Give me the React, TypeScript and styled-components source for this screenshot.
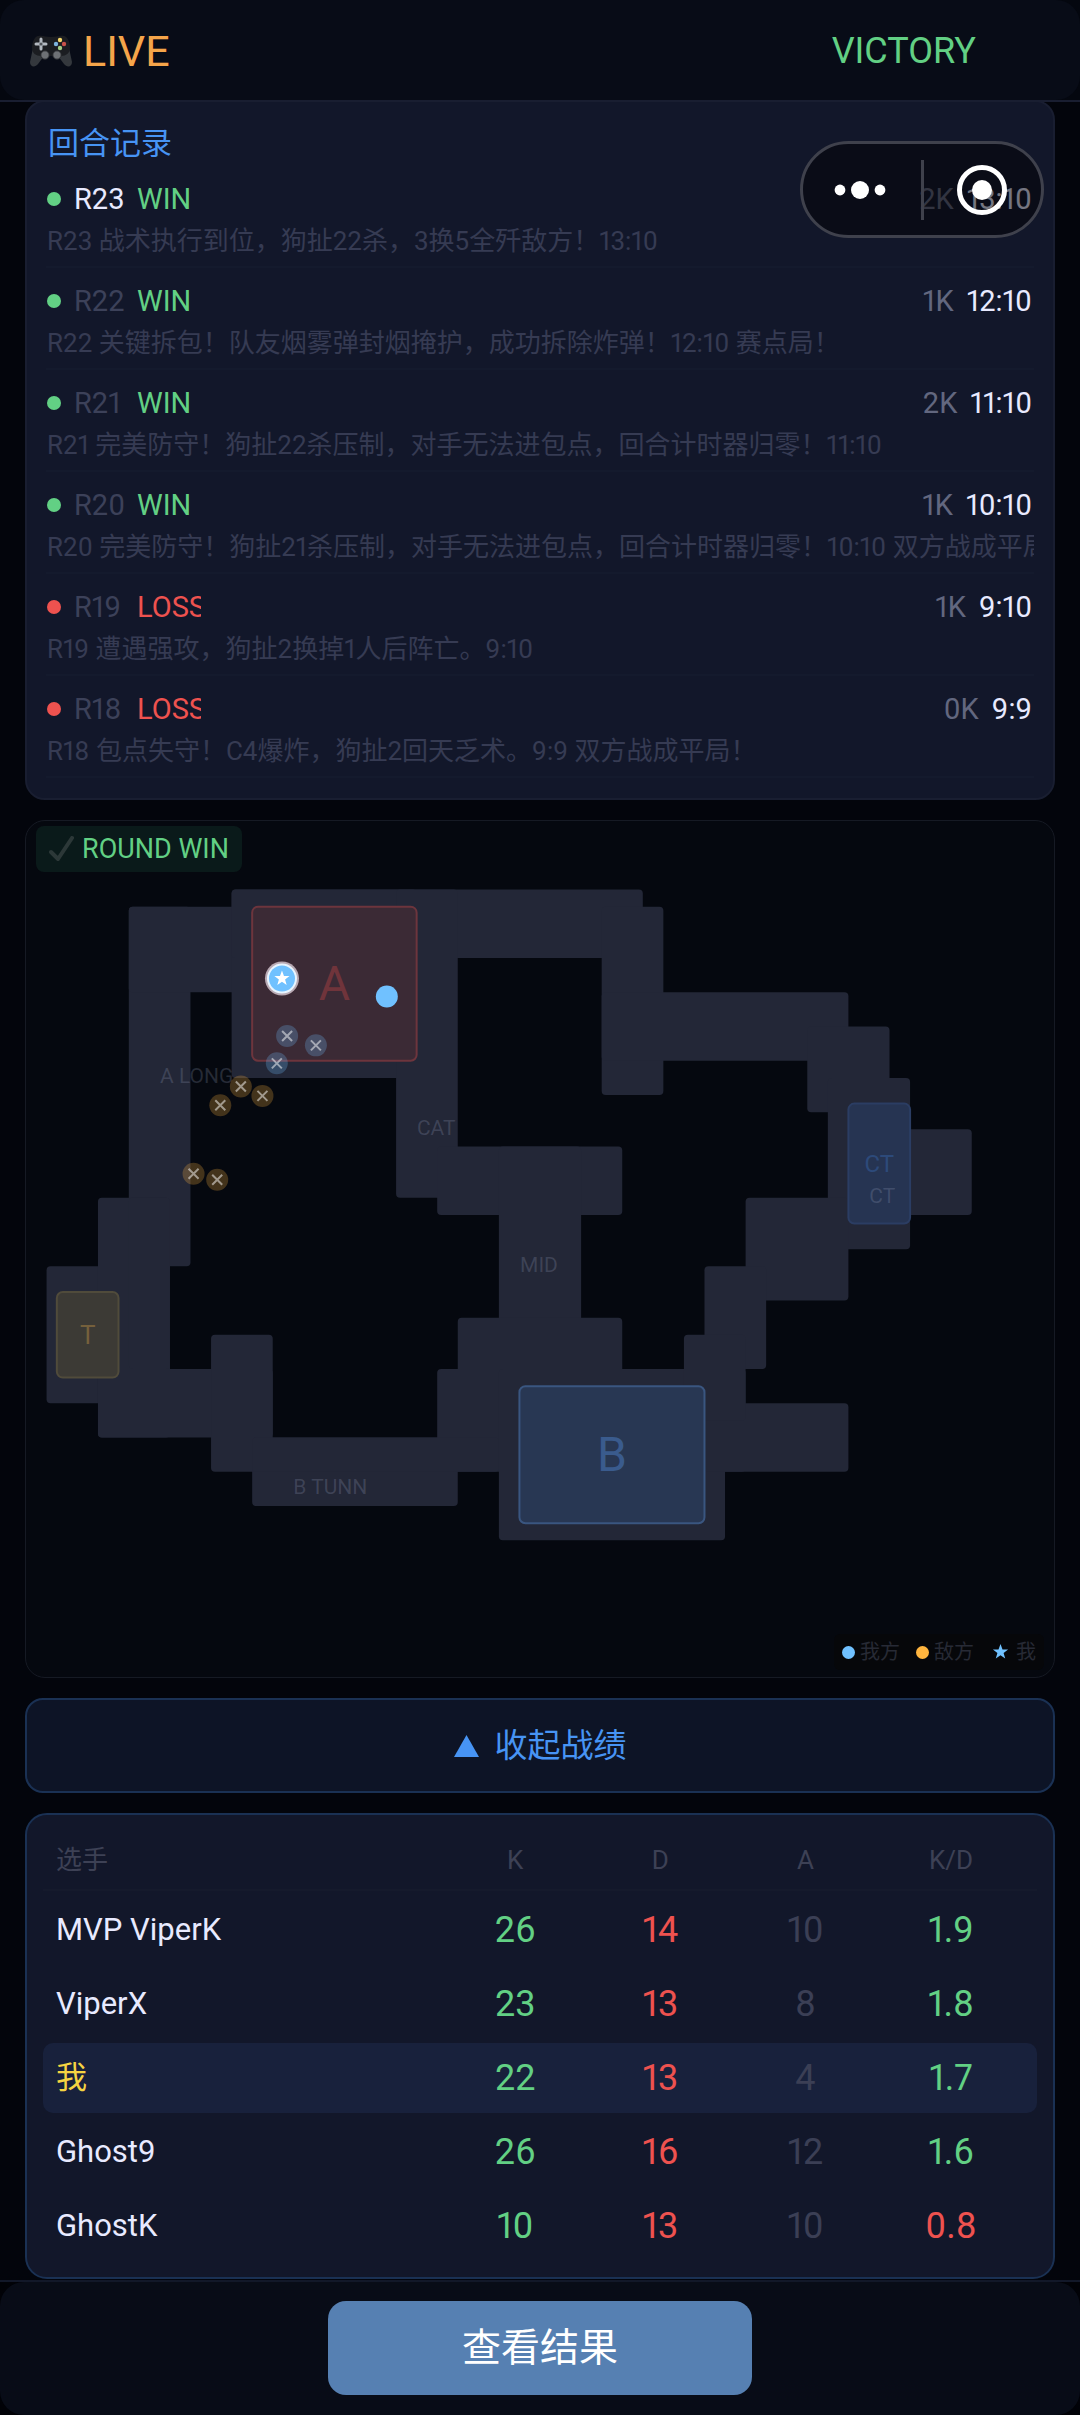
import React from "react";
import styled, { createGlobalStyle } from "styled-components";

const c = {
  page: "#03050c",
  bar: "#080c17",
  card: "#12172a",
  line: "#191e31",
  dim: "#3c4159",
  faint: "#363b53",
  mid: "#62677f",
  text: "#e8eaff",
  green: "#62d084",
  red: "#ee524f",
  blue: "#4794f4",
  ally: "#70c1ff",
  enemy: "#ffb53f",
};

const GlobalStyle = createGlobalStyle`
  * { box-sizing: border-box; }
  body {
    margin: 0;
    background: ${c.page};
    color: ${c.text};
    font-family: Roboto, "Noto Sans CJK SC", sans-serif;
    font-variant-numeric: proportional-nums;
  }
  button { font-family: inherit; cursor: pointer; }
`;

const Screen = styled.div`
  position: relative;
  display: flex;
  flex-direction: column;
  min-height: 100vh;
`;

const HeaderBar = styled.header`
  position: relative;
  z-index: 1;
  background: #04070f;
  border-bottom: 2px solid ${c.line};
`;

const HeaderInner = styled.div`
  display: flex;
  align-items: center;
  justify-content: space-between;
  height: 100px;
  padding: 2px 104px 0 29px;
  border-radius: 24px;
  background: ${c.bar};
`;

const Live = styled.h1`
  display: flex;
  align-items: center;
  gap: 10px;
  margin: 0;
  font-size: 43px;
  font-weight: 400;
  line-height: 52px;
  color: #f5a54a;
`;

const Outcome = styled.div`
  font-size: 36px;
  line-height: 44px;
  color: ${c.green};
`;

const Main = styled.main`
  display: flex;
  flex-direction: column;
  flex: 1;
  gap: 20px;
  margin-top: -2px;
  padding: 0 25px;
`;

const LogCard = styled.section`
  padding: 20px 19px;
  border: 2px solid ${c.line};
  border-radius: 20px;
  background: ${c.card};
`;

const LogTitle = styled.h2`
  margin: 0;
  padding-left: 2px;
  font-size: 31px;
  font-weight: 400;
  line-height: 44px;
  color: ${c.blue};
`;

const RoundList = styled.ol`
  margin: 0;
  padding: 0;
  list-style: none;
`;

const Round = styled.li`
  padding: 13px 0 7px;
  border-bottom: 2px solid #141a2d;
`;

const RoundHead = styled.div`
  display: flex;
  align-items: center;
  gap: 13px;
  padding-left: 1px;
  font-size: 29px;
  line-height: 40px;
`;

const Dot = styled.i<{ $color: string; $size: number }>`
  flex: none;
  width: ${(p) => p.$size}px;
  height: ${(p) => p.$size}px;
  border-radius: 50%;
  background: ${(p) => p.$color};
`;

const RoundNo = styled.span<{ $current: boolean }>`
  width: 50px;
  white-space: nowrap;
  color: ${(p) => (p.$current ? c.text : c.dim)};
`;

const Result = styled.span<{ $win: boolean }>`
  width: 64px;
  overflow: hidden;
  white-space: nowrap;
  color: ${(p) => (p.$win ? c.green : c.red)};
`;

const Kills = styled.span`
  margin-left: auto;
  color: ${c.mid};
`;

const Score = styled.span`
  padding-right: 2px;
  color: ${c.text};
`;

const Note = styled.p`
  margin: 4px 0 0;
  padding-left: 1px;
  overflow: hidden;
  white-space: nowrap;
  font-size: 26px;
  line-height: 36px;
  color: ${c.faint};
`;

const MapCard = styled.section`
  position: relative;
  aspect-ratio: 6 / 5;
  border: 1px solid #161a24;
  border-radius: 20px;
  background: #05080f;
  overflow: hidden;
`;

const MapSvg = styled.svg`
  display: block;
  width: 100%;
  height: 100%;
`;

const MapLabel = styled.text<{ $size: number }>`
  font-size: ${(p) => p.$size}px;
  text-anchor: middle;
  dominant-baseline: central;
`;

const RoundBadge = styled.div`
  position: absolute;
  top: 5px;
  left: 10px;
  display: flex;
  align-items: center;
  gap: 8px;
  padding: 0 13px;
  border-radius: 8px;
  background: #0a1a1a;
  font-size: 27px;
  line-height: 46px;
  color: ${c.green};
`;

const Legend = styled.div`
  position: absolute;
  right: 10px;
  bottom: 7px;
  display: flex;
  gap: 16px;
  padding: 0 8px;
  border-radius: 6px;
  background: #06070a;
  font-size: 20px;
  line-height: 36px;
  color: #272a35;
`;

const LegendItem = styled.span`
  display: flex;
  align-items: center;
  gap: 5px;
`;

const Toggle = styled.button`
  display: flex;
  align-items: center;
  justify-content: center;
  gap: 16px;
  padding: 22px;
  border: 2px solid #1a3154;
  border-radius: 18px;
  background: #0d1426;
  font-size: 33px;
  line-height: 47px;
  color: ${c.blue};
`;

const StatsCard = styled.section`
  padding: 12px 16px;
  border: 2px solid #1a3154;
  border-radius: 22px;
  background: ${c.card};
`;

const StatsTable = styled.table`
  width: 100%;
  table-layout: fixed;
  border-collapse: separate;
  border-spacing: 0 4px;
`;

const HeadCell = styled.th<{ $width?: string }>`
  width: ${(p) => p.$width || "auto"};
  height: 60px;
  padding: 0;
  border-bottom: 2px solid #151a2c;
  font-size: 26px;
  font-weight: 400;
  line-height: 36px;
  color: #3d4155;
  &:first-child { padding-left: 13px; text-align: left; }
  &:last-child { padding-right: 13px; }
`;

const PlayerRow = styled.tr<{ $me: boolean }>`
  & > * { background: ${(p) => (p.$me ? "#18213c" : "transparent")}; }
  & > :first-child { border-radius: 10px 0 0 10px; }
  & > :last-child { border-radius: 0 10px 10px 0; padding-right: 13px; }
`;

const Player = styled.th<{ $me: boolean }>`
  height: 70px;
  padding: 0 0 0 13px;
  text-align: left;
  font-size: 31px;
  font-weight: 400;
  line-height: 40px;
  color: ${(p) => (p.$me ? "#f5d442" : c.text)};
`;

const Stat = styled.td<{ $color: string }>`
  padding: 0;
  text-align: center;
  font-size: 36px;
  line-height: 44px;
  color: ${(p) => p.$color};
`;

const Footer = styled.footer`
  background: #010207;
  border-top: 2px solid #121829;
`;

const FooterInner = styled.div`
  display: flex;
  justify-content: center;
  padding: 19px 26px 20px;
  border-radius: 24px;
  background: ${c.bar};
`;

const ResultButton = styled.button`
  min-width: 424px;
  padding: 20px 32px;
  border: 0;
  border-radius: 18px;
  background: #5680b2;
  font-size: 39px;
  line-height: 54px;
  color: #fff;
`;

const Capsule = styled.div`
  position: absolute;
  z-index: 2;
  top: 141px;
  right: 36px;
  display: flex;
  align-items: center;
  width: 244px;
  height: 97px;
  border: 3px solid #3f414c;
  border-radius: 49px;
  background: rgba(2, 2, 4, 0.5);
`;

const CapsuleButton = styled.button`
  display: flex;
  flex: 1;
  align-items: center;
  justify-content: center;
  height: 100%;
  padding: 0;
  border: 0;
  background: none;
`;

const CapsuleRule = styled.i`
  width: 3px;
  height: 60px;
  background: #3f414c;
`;

const rounds = [
  { no: "R23", win: true, kills: "2K", score: "13:10", note: "R23 战术执行到位，狗扯22杀，3换5全歼敌方！13:10" },
  { no: "R22", win: true, kills: "1K", score: "12:10", note: "R22 关键拆包！队友烟雾弹封烟掩护，成功拆除炸弹！12:10 赛点局！" },
  { no: "R21", win: true, kills: "2K", score: "11:10", note: "R21 完美防守！狗扯22杀压制，对手无法进包点，回合计时器归零！11:10" },
  { no: "R20", win: true, kills: "1K", score: "10:10", note: "R20 完美防守！狗扯21杀压制，对手无法进包点，回合计时器归零！10:10 双方战成平局！" },
  { no: "R19", win: false, kills: "1K", score: "9:10", note: "R19 遭遇强攻，狗扯2换掉1人后阵亡。9:10" },
  { no: "R18", win: false, kills: "0K", score: "9:9", note: "R18 包点失守！C4爆炸，狗扯2回天乏术。9:9 双方战成平局！" },
];

// Walkable areas as [x, y, width, height], all in percent of the map.
const areas = [
  [10, 10, 6, 42],
  [10, 10, 12, 10],
  [20, 8, 18, 22],
  [20, 8, 40, 8],
  [36, 8, 6, 36],
  [56, 10, 6, 22],
  [56, 20, 24, 8],
  [76, 24, 8, 10],
  [78, 30, 8, 20],
  [80, 36, 12, 10],
  [70, 44, 10, 12],
  [40, 38, 18, 8],
  [46, 38, 8, 30],
  [42, 58, 16, 10],
  [40, 64, 30, 12],
  [46, 64, 22, 20],
  [66, 68, 14, 8],
  [66, 52, 6, 12],
  [64, 60, 6, 10],
  [2, 52, 12, 16],
  [7, 44, 7, 28],
  [10, 44, 4, 20],
  [7, 64, 17, 8],
  [18, 60, 6, 16],
  [22, 72, 20, 8],
  [22, 72, 24, 4],
];

const zones = [
  { x: 22, y: 10, w: 16, h: 18, fill: "#3b2a35", stroke: "#6d353d", label: "A", size: 48, ink: "#70343b", tx: 30, ty: 19 },
  { x: 48, y: 66, w: 18, h: 16, fill: "#283753", stroke: "#3a5680", label: "B", size: 48, ink: "#3a5b8d", tx: 57, ty: 74 },
  { x: 3, y: 55, w: 6, h: 10, fill: "#3c3a35", stroke: "#504b3b", label: "T", size: 26, ink: "#75603c", tx: 6, ty: 60 },
  { x: 80, y: 33, w: 6, h: 14, fill: "#263452", stroke: "#2b3d63", label: "CT", size: 24, ink: "#2d4a7a", tx: 83, ty: 40 },
];

const places = [
  { x: 16.6, y: 29.8, label: "A LONG" },
  { x: 39.9, y: 35.8, label: "CAT" },
  { x: 49.9, y: 51.8, label: "MID" },
  { x: 29.6, y: 77.8, label: "B TUNN" },
  { x: 83.3, y: 43.8, label: "CT" },
];

const fallen = [
  { x: 25.4, y: 25.1, ally: true },
  { x: 28.2, y: 26.2, ally: true },
  { x: 24.4, y: 28.3, ally: true },
  { x: 20.9, y: 31, ally: false },
  { x: 23, y: 32.1, ally: false },
  { x: 18.9, y: 33.2, ally: false },
  { x: 16.3, y: 41.2, ally: false },
  { x: 18.6, y: 41.9, ally: false },
];

const players = [
  { name: "MVP ViperK", k: 26, d: 14, a: 10, kd: 1.9 },
  { name: "ViperX", k: 23, d: 13, a: 8, kd: 1.8 },
  { name: "我", k: 22, d: 13, a: 4, kd: 1.7, me: true },
  { name: "Ghost9", k: 26, d: 16, a: 12, kd: 1.6 },
  { name: "GhostK", k: 10, d: 13, a: 10, kd: 0.8 },
];

const starPoints = "0,-8 2,-2.6 7.6,-2.5 3.1,1 4.7,6.5 0,3.3 -4.7,6.5 -3.1,1 -7.6,-2.5 -2,-2.6";

function Gamepad() {
  return (
    <svg width="44" height="34" viewBox="0 0 44 34" aria-hidden="true">
      <path d="M4 14 L1 28 C1 33 6 34 9 30 L15 22 Z M40 14 L43 28 C43 33 38 34 35 30 L29 22 Z" fill="#34383d" />
      <path d="M9 2 C14 1 16 3 22 3 C28 3 30 1 35 2 C39 3 41 9 41 14 C41 19 37 22 32 22 L12 22 C7 22 3 19 3 14 C3 9 5 3 9 2 Z" fill="#1b1d21" />
      <path d="M12 5 v10 M7 10 h10" stroke="#b3b9c0" strokeWidth="3" strokeLinecap="round" />
      <circle cx="12" cy="10" r="1.6" fill="#4d5156" />
      <circle cx="31" cy="6" r="2.2" fill="#f3d76c" />
      <circle cx="27" cy="10" r="2.2" fill="#7db4de" />
      <circle cx="35" cy="10" r="2.2" fill="#c9524a" />
      <circle cx="31" cy="14" r="2.2" fill="#a5cf86" />
      <circle cx="16" cy="21" r="4.2" fill="#6e7175" stroke="#26282c" />
      <circle cx="28" cy="21" r="4.2" fill="#6e7175" stroke="#26282c" />
    </svg>
  );
}

function Marker({ x, y, children }: { x: number; y: number; children: React.ReactNode }) {
  return (
    <svg x={`${x}%`} y={`${y}%`} overflow="visible">
      {children}
    </svg>
  );
}

function TacticalMap() {
  return (
    <MapSvg role="img" aria-label="Map">
      {areas.map(([x, y, w, h], i) => (
        <rect key={i} x={`${x}%`} y={`${y}%`} width={`${w}%`} height={`${h}%`} rx="4" fill="#232737" />
      ))}
      {zones.map((z) => (
        <rect
          key={z.label}
          x={`${z.x}%`}
          y={`${z.y}%`}
          width={`${z.w}%`}
          height={`${z.h}%`}
          rx="6"
          fill={z.fill}
          stroke={z.stroke}
          strokeWidth="2"
        />
      ))}
      {zones.map((z) => (
        <MapLabel key={z.label} x={`${z.tx}%`} y={`${z.ty}%`} $size={z.size} fill={z.ink}>
          {z.label}
        </MapLabel>
      ))}
      {places.map((p) => (
        <MapLabel key={p.label} x={`${p.x}%`} y={`${p.y}%`} $size={21} fill="rgba(160, 170, 200, 0.22)">
          {p.label}
        </MapLabel>
      ))}
      {fallen.map((f, i) => (
        <Marker key={i} x={f.x} y={f.y}>
          <circle r="11" fill={f.ally ? c.ally : c.enemy} opacity="0.25" />
          <path d="M-5 -5 L5 5 M5 -5 L-5 5" stroke="#fff" strokeWidth="2" opacity="0.5" />
        </Marker>
      ))}
      <Marker x={35.1} y={20.5}>
        <circle r="11" fill={c.ally} />
      </Marker>
      <Marker x={24.9} y={18.4}>
        <circle r="17" fill="#b9aab4" />
        <circle r="15" fill="#e8f5ff" />
        <circle r="13" fill={c.ally} />
        <polygon points={starPoints} fill="#fff" />
      </Marker>
    </MapSvg>
  );
}

export default function App() {
  return (
    <Screen>
      <GlobalStyle />
      <HeaderBar>
        <HeaderInner>
          <Live>
            <Gamepad />
            LIVE
          </Live>
          <Outcome>VICTORY</Outcome>
        </HeaderInner>
      </HeaderBar>

      <Capsule>
        <CapsuleButton type="button" aria-label="More">
          <svg width="56" height="20" viewBox="0 0 56 20" fill="#fff">
            <circle cx="6" cy="10" r="5.4" />
            <circle cx="26" cy="10" r="9" />
            <circle cx="46" cy="10" r="5.4" />
          </svg>
        </CapsuleButton>
        <CapsuleRule />
        <CapsuleButton type="button" aria-label="Close">
          <svg width="50" height="50" viewBox="0 0 50 50">
            <circle cx="25" cy="25" r="22.5" fill="none" stroke="#fff" strokeWidth="5" />
            <circle cx="25" cy="25" r="10" fill="#fff" />
          </svg>
        </CapsuleButton>
      </Capsule>

      <Main>
        <LogCard>
          <LogTitle>回合记录</LogTitle>
          <RoundList>
            {rounds.map((r, i) => (
              <Round key={r.no}>
                <RoundHead>
                  <Dot $size={14} $color={r.win ? c.green : c.red} />
                  <RoundNo $current={i === 0}>{r.no}</RoundNo>
                  <Result $win={r.win}>{r.win ? "WIN" : "LOSS"}</Result>
                  <Kills>{r.kills}</Kills>
                  <Score>{r.score}</Score>
                </RoundHead>
                <Note>{r.note}</Note>
              </Round>
            ))}
          </RoundList>
        </LogCard>

        <MapCard>
          <TacticalMap />
          <RoundBadge>
            <svg width="25" height="26" viewBox="0 0 25 26" aria-hidden="true">
              <path d="M2 16 L9 23 L23 2" fill="none" stroke="#2c3838" strokeWidth="4" strokeLinecap="round" strokeLinejoin="round" />
            </svg>
            ROUND WIN
          </RoundBadge>
          <Legend>
            <LegendItem>
              <Dot $size={13} $color={c.ally} />
              我方
            </LegendItem>
            <LegendItem>
              <Dot $size={13} $color={c.enemy} />
              敌方
            </LegendItem>
            <LegendItem>
              <svg width="21" height="18" viewBox="-10.5 -9 21 18" aria-hidden="true">
                <polygon points={starPoints} fill={c.ally} />
              </svg>
              我
            </LegendItem>
          </Legend>
        </MapCard>

        <Toggle type="button" aria-expanded="true">
          <svg width="25" height="22" viewBox="0 0 25 22" aria-hidden="true">
            <path d="M12.5 0 L25 22 L0 22 Z" fill={c.blue} />
          </svg>
          收起战绩
        </Toggle>

        <StatsCard>
          <StatsTable>
            <thead>
              <tr>
                <HeadCell scope="col">选手</HeadCell>
                <HeadCell scope="col" $width="14.6%">K</HeadCell>
                <HeadCell scope="col" $width="14.6%">D</HeadCell>
                <HeadCell scope="col" $width="14.6%">A</HeadCell>
                <HeadCell scope="col" $width="16%">K/D</HeadCell>
              </tr>
            </thead>
            <tbody>
              {players.map((p) => (
                <PlayerRow key={p.name} $me={!!p.me}>
                  <Player scope="row" $me={!!p.me}>{p.name}</Player>
                  <Stat $color={c.green}>{p.k}</Stat>
                  <Stat $color={c.red}>{p.d}</Stat>
                  <Stat $color="#3b3f55">{p.a}</Stat>
                  <Stat $color={p.kd >= 1 ? c.green : c.red}>{p.kd.toFixed(1)}</Stat>
                </PlayerRow>
              ))}
            </tbody>
          </StatsTable>
        </StatsCard>
      </Main>

      <Footer>
        <FooterInner>
          <ResultButton type="button">查看结果</ResultButton>
        </FooterInner>
      </Footer>
    </Screen>
  );
}
